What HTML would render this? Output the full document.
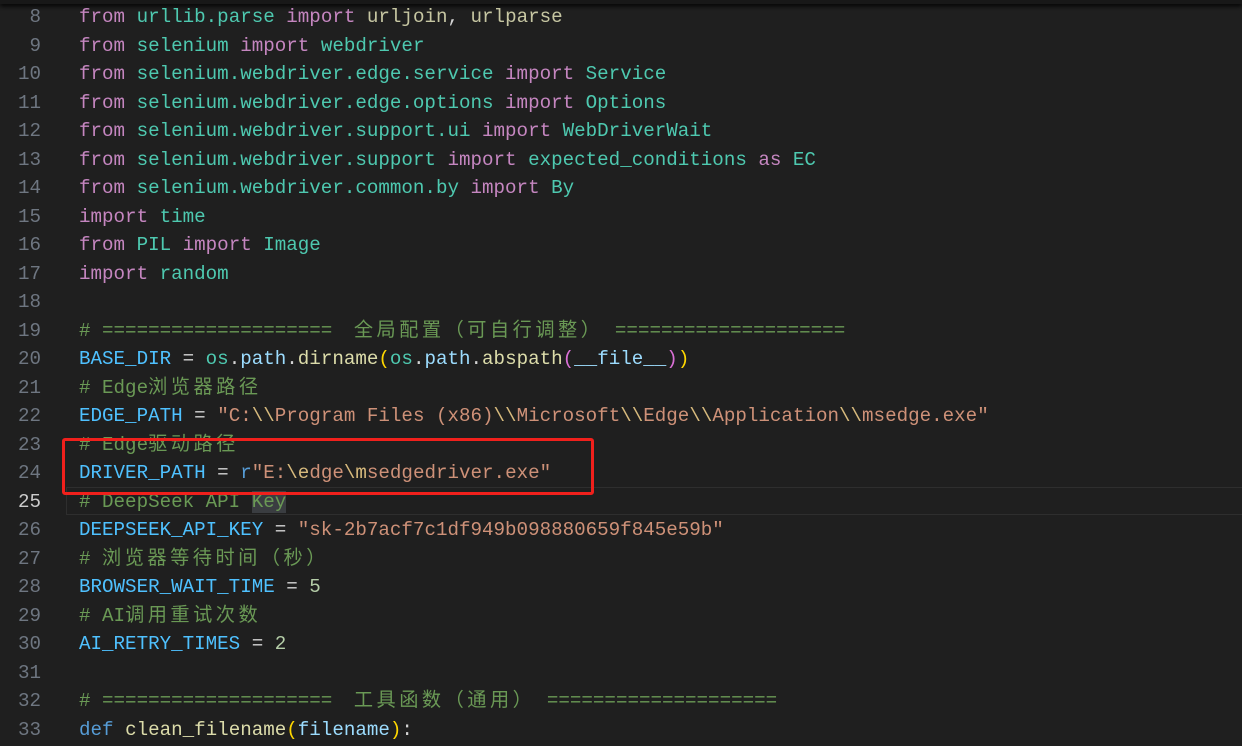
<!DOCTYPE html>
<html><head><meta charset="utf-8"><style>
body{margin:0;width:1242px;height:746px;background:#1f1f1f;overflow:hidden;position:relative;font-family:"Liberation Mono","Noto Sans CJK SC",monospace;font-size:19.2px;}
.l{position:absolute;left:0;height:28.5px;line-height:28.5px;white-space:pre;width:1242px}
.n{position:absolute;right:1201px;color:#6e7681;text-align:right}
.c{position:absolute;left:79px;color:#d4d4d4}
.k{color:#c586c0}.m{color:#4ec9b0}.u{color:#c6c6a2}.v{color:#4fc1ff}.s{color:#ce9178}.e{color:#d7ba7d}.cm{color:#6a9955}.f{color:#dcdcaa}.num{color:#b5cea8}.p{color:#9cdcfe}.y{color:#ffd700}.pk{color:#da70d6}.d{color:#569cd6}
.z{letter-spacing:3.5px}
</style></head><body>
<div style="position:absolute;left:0;top:0;width:1242px;height:4px;background:#181818;box-shadow:0 2px 4px #000"></div>
<div style="position:absolute;left:66px;top:487px;width:1176px;height:26px;border-top:1px solid #2e2e2e;border-bottom:1px solid #2e2e2e;border-left:1px solid #2e2e2e"></div>
<div style="position:absolute;left:62px;top:438px;width:526px;height:51px;border:3px solid #f0201c;border-radius:3px;z-index:5"></div>
<div class="l" style="top:3px"><span class="n">8</span><span class="c"><span class="k">from</span> <span class="m">urllib.parse</span> <span class="k">import</span> <span class="u">urljoin</span>, <span class="u">urlparse</span></span></div>
<div class="l" style="top:31.5px"><span class="n">9</span><span class="c"><span class="k">from</span> <span class="m">selenium</span> <span class="k">import</span> <span class="m">webdriver</span></span></div>
<div class="l" style="top:60px"><span class="n">10</span><span class="c"><span class="k">from</span> <span class="m">selenium.webdriver.edge.service</span> <span class="k">import</span> <span class="m">Service</span></span></div>
<div class="l" style="top:88.5px"><span class="n">11</span><span class="c"><span class="k">from</span> <span class="m">selenium.webdriver.edge.options</span> <span class="k">import</span> <span class="m">Options</span></span></div>
<div class="l" style="top:117px"><span class="n">12</span><span class="c"><span class="k">from</span> <span class="m">selenium.webdriver.support.ui</span> <span class="k">import</span> <span class="m">WebDriverWait</span></span></div>
<div class="l" style="top:145.5px"><span class="n">13</span><span class="c"><span class="k">from</span> <span class="m">selenium.webdriver.support</span> <span class="k">import</span> <span class="m">expected_conditions</span> <span class="k">as</span> <span class="m">EC</span></span></div>
<div class="l" style="top:174px"><span class="n">14</span><span class="c"><span class="k">from</span> <span class="m">selenium.webdriver.common.by</span> <span class="k">import</span> <span class="m">By</span></span></div>
<div class="l" style="top:202.5px"><span class="n">15</span><span class="c"><span class="k">import</span> <span class="m">time</span></span></div>
<div class="l" style="top:231px"><span class="n">16</span><span class="c"><span class="k">from</span> <span class="m">PIL</span> <span class="k">import</span> <span class="m">Image</span></span></div>
<div class="l" style="top:259.5px"><span class="n">17</span><span class="c"><span class="k">import</span> <span class="m">random</span></span></div>
<div class="l" style="top:288px"><span class="n">18</span></div>
<div class="l" style="top:316.5px"><span class="n">19</span><span class="c cm"># ==================== <span class="z" style="margin-left:10px">全局配置（可自行调整）</span> ====================</span></div>
<div class="l" style="top:345px"><span class="n">20</span><span class="c"><span class="v">BASE_DIR</span> = <span class="m">os</span>.<span class="p">path</span>.<span class="f">dirname</span><span class="y">(</span><span class="m">os</span>.<span class="p">path</span>.<span class="f">abspath</span><span class="pk">(</span><span class="p">__file__</span><span class="pk">)</span><span class="y">)</span></span></div>
<div class="l" style="top:373.5px"><span class="n">21</span><span class="c cm"># Edge<span class="z">浏览器路径</span></span></div>
<div class="l" style="top:402px"><span class="n">22</span><span class="c"><span class="v">EDGE_PATH</span> = <span class="s">"C:<span class="e">\\</span>Program Files (x86)<span class="e">\\</span>Microsoft<span class="e">\\</span>Edge<span class="e">\\</span>Application<span class="e">\\</span>msedge.exe"</span></span></div>
<div class="l" style="top:430.5px"><span class="n">23</span><span class="c cm"># Edge<span class="z">驱动路径</span></span></div>
<div class="l" style="top:459px"><span class="n">24</span><span class="c"><span class="v">DRIVER_PATH</span> = <span class="d">r</span><span class="s">"E:<span class="e">\e</span>dge<span class="e">\m</span>sedgedriver.exe"</span></span></div>
<div class="l" style="top:487.5px"><span class="n" style="color:#ccc">25</span><span class="c cm"># DeepSeek API <span style="background:#3a3d41">Key</span></span></div>
<div class="l" style="top:516px"><span class="n">26</span><span class="c"><span class="v">DEEPSEEK_API_KEY</span> = <span class="s">"sk-2b7acf7c1df949b098880659f845e59b"</span></span></div>
<div class="l" style="top:544.5px"><span class="n">27</span><span class="c cm"># <span class="z">浏览器等待时间（秒）</span></span></div>
<div class="l" style="top:573px"><span class="n">28</span><span class="c"><span class="v">BROWSER_WAIT_TIME</span> = <span class="num">5</span></span></div>
<div class="l" style="top:601.5px"><span class="n">29</span><span class="c cm"># AI<span class="z">调用重试次数</span></span></div>
<div class="l" style="top:630px"><span class="n">30</span><span class="c"><span class="v">AI_RETRY_TIMES</span> = <span class="num">2</span></span></div>
<div class="l" style="top:658.5px"><span class="n">31</span></div>
<div class="l" style="top:687px"><span class="n">32</span><span class="c cm"># ==================== <span class="z" style="margin-left:10px">工具函数（通用）</span> ====================</span></div>
<div class="l" style="top:715.5px"><span class="n">33</span><span class="c"><span class="d">def</span> <span class="f">clean_filename</span><span class="y">(</span><span class="p">filename</span><span class="y">)</span>:</span></div>
</body></html>
